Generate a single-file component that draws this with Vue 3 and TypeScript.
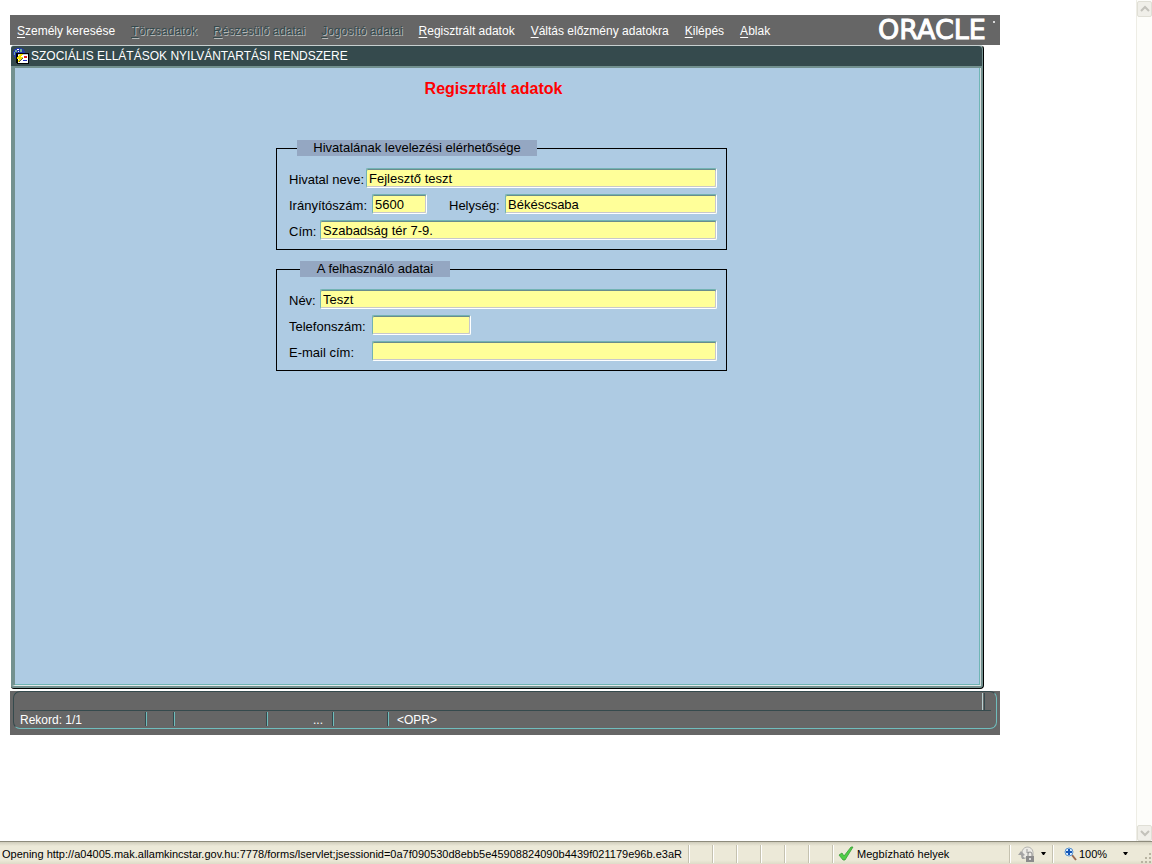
<script setup lang="ts">
import { ref } from 'vue'

interface MenuItem {
  label: string
  disabled?: boolean
}

const menu: MenuItem[] = [
  { label: 'Személy keresése' },
  { label: 'Törzsadatok', disabled: true },
  { label: 'Részesülő adatai', disabled: true },
  { label: 'Jogosító adatai', disabled: true },
  { label: 'Regisztrált adatok' },
  { label: 'Váltás előzmény adatokra' },
  { label: 'Kilépés' },
  { label: 'Ablak' },
]

const office = ref('Fejlesztő teszt')
const zip = ref('5600')
const city = ref('Békéscsaba')
const address = ref('Szabadság tér 7-9.')
const userName = ref('Teszt')
const phone = ref('')
const email = ref('')
</script>

<template>
  <div class="browser">
    <div class="viewport">
      <main class="page">
        <div class="applet">
          <header class="menubar">
            <nav class="menu">
              <button
                v-for="item in menu"
                :key="item.label"
                type="button"
                class="menu-item"
                :disabled="item.disabled"
              ><span class="key">{{ item.label.charAt(0) }}</span>{{ item.label.slice(1) }}</button>
            </nav>
            <svg class="logo" width="121" height="30" viewBox="0 0 121 30" role="img" aria-label="Oracle">
              <text x="0" y="24" class="logo-text">ORACLE</text>
              <circle cx="116" cy="7" r="1" fill="#fff" />
            </svg>
          </header>

          <section class="window">
            <div class="titlebar">
              <svg width="16" height="16" viewBox="0 0 16 16" shape-rendering="crispEdges" aria-hidden="true">
                <path d="M3 0h6v1h2v2h1v4H4v3H2V9H1V7H0V3h1V1h2z" fill="#2438a8" />
                <path d="M2 2h2v2H2v3H1V4h1zM7 1h2v3H7z" fill="#6fae98" />
                <path d="M4 1h2v1H4zM5 3h1v1H5z" fill="#fff" />
                <path d="M3 5h13v11H4v-1H3z" fill="#000" />
                <path d="M5 6h10v9H5z" fill="#fff" />
                <path d="M5 6h10v1H5z" fill="#c0c6dc" />
                <path d="M11 8h3v2h-3z" fill="#e02020" />
                <path d="M10 12h4v1h-4z" fill="#2030c0" />
                <path d="M7 6h3v1H9v1H8v1h2v1H9v1H8v1H7v1H6v1H5v-2h1v-1H4V9h1V8h1V7h1z" fill="#f5e000" />
                <path d="M9 10h1v1H9zM8 11h1v1H8zM7 12h1v1H7zM6 13h1v1H6z" fill="#555" />
              </svg>
              <span>SZOCIÁLIS ELLÁTÁSOK NYILVÁNTARTÁSI RENDSZERE</span>
            </div>
            <div class="canvas">
              <h1 class="heading">Regisztrált adatok</h1>
              <form class="form" @submit.prevent>
                <fieldset class="group">
                  <legend class="legend office-legend"><span class="caption">Hivatalának levelezési elérhetősége</span></legend>
                  <div class="row">
                    <label for="office" class="w-office">Hivatal neve:</label>
                    <input id="office" v-model="office" type="text" />
                  </div>
                  <div class="row">
                    <label for="zip" class="w-wide">Irányítószám:</label>
                    <input id="zip" v-model="zip" type="text" class="zip" />
                    <label for="city" class="w-city">Helység:</label>
                    <input id="city" v-model="city" type="text" />
                  </div>
                  <div class="row">
                    <label for="address" class="w-short">Cím:</label>
                    <input id="address" v-model="address" type="text" />
                  </div>
                </fieldset>
                <fieldset class="group">
                  <legend class="legend user-legend"><span class="caption">A felhasználó adatai</span></legend>
                  <div class="row">
                    <label for="name" class="w-short">Név:</label>
                    <input id="name" v-model="userName" type="text" />
                  </div>
                  <div class="row">
                    <label for="phone" class="w-wide">Telefonszám:</label>
                    <input id="phone" v-model="phone" type="tel" class="phone" />
                  </div>
                  <div class="row">
                    <label for="email" class="w-wide">E-mail cím:</label>
                    <input id="email" v-model="email" type="text" />
                  </div>
                </fieldset>
              </form>
            </div>
          </section>

          <footer class="console">
            <div class="console-box">
              <div class="message"></div>
              <div class="cells">
                <span class="cell record">Rekord: 1/1</span>
                <span class="cell narrow"></span>
                <span class="cell medium"></span>
                <span class="cell dots">...</span>
                <span class="cell small"></span>
                <span class="cell last">&lt;OPR&gt;</span>
              </div>
            </div>
          </footer>
        </div>
      </main>
      <div class="scrollbar">
        <button type="button" class="scroll-btn" aria-label="Scroll up">
          <svg width="10" height="8" viewBox="0 0 10 8"><path d="M1 6l4-4 4 4" /></svg>
        </button>
        <button type="button" class="scroll-btn" aria-label="Scroll down">
          <svg width="10" height="8" viewBox="0 0 10 8"><path d="M1 2l4 4 4-4" /></svg>
        </button>
      </div>
    </div>

    <footer class="statusbar">
      <span class="url">Opening http://a04005.mak.allamkincstar.gov.hu:7778/forms/lservlet;jsessionid=0a7f090530d8ebb5e45908824090b4439f021179e96b.e3aR</span>
      <span v-for="n in 6" :key="n" class="slot"></span>
      <span class="zone">
        <svg width="16" height="16" viewBox="0 0 16 16" aria-hidden="true">
          <path d="M1 9l3-2 2 3 7-9 2 0L7 14H5z" fill="#4fce45" stroke="#3a9c38" stroke-width=".8" />
        </svg>
        Megbízható helyek
      </span>
      <button type="button" class="lock" aria-label="Protected mode">
        <svg width="17" height="16" viewBox="0 0 17 16" aria-hidden="true">
          <path d="M4 12V7a5 5 0 0 1 11-1v6z" fill="#ecebe6" stroke="#b4b4b0" />
          <path d="M0 9l3-4 4 4-2 1 2 3H4l-1-4z" fill="#a4a4a4" />
          <path d="M9 3v4l2-1" fill="none" stroke="#999" />
          <rect x="8" y="10" width="8" height="6" fill="#8c8c8c" />
          <path d="M10 10V8a2 2 0 0 1 4 0v2" fill="none" stroke="#8c8c8c" />
          <path d="M11 12h2v2h-2z" fill="#ddd" />
        </svg>
        <svg width="5" height="3" viewBox="0 0 5 3" aria-hidden="true"><path d="M0 0h5L3 3H2z" /></svg>
      </button>
      <button type="button" class="zoom">
        <svg width="13" height="14" viewBox="0 0 13 14" aria-hidden="true">
          <path d="M8 8l4 5" stroke="#9a6a50" stroke-width="2" />
          <circle cx="5" cy="5" r="4" fill="#d9ecfc" stroke="#5b93cf" />
          <path d="M5 2v6M2 5h6" stroke="#1658b8" stroke-width="2" />
        </svg>
        <span>100%</span>
        <svg class="zoom-arrow" width="5" height="3" viewBox="0 0 5 3" aria-hidden="true"><path d="M0 0h5L3 3H2z" /></svg>
      </button>
      <svg class="grip" width="12" height="12" viewBox="0 0 12 12" aria-hidden="true">
        <path d="M9 1h2v2H9zM5 5h2v2H5zM9 5h2v2H9zM1 9h2v2H1zM5 9h2v2H5zM9 9h2v2H9z" fill="#b8b4a2" />
      </svg>
    </footer>
  </div>
</template>

<style>
html,
body {
  margin: 0;
  background: #fff;
}
</style>

<style scoped>
.browser {
  display: flex;
  flex-direction: column;
  min-height: 100vh;
  font: 12px/16px "Liberation Sans", Arial, sans-serif;
  color: #000;
}
button {
  border: 0;
  padding: 0;
  background: none;
  font: inherit;
  color: inherit;
}
.viewport {
  flex: 1;
  display: flex;
}
.page {
  flex: 1;
  min-width: 0;
  padding: 15px 10px;
}
.applet {
  max-width: 990px;
}
.menubar {
  display: flex;
  align-items: center;
  justify-content: space-between;
  height: 30px;
  padding: 0 1px 0 7px;
  background: #666;
  color: #fff;
}
.menu {
  display: flex;
  gap: 16px;
  padding-top: 2px;
  white-space: nowrap;
}
.menu-item:disabled {
  color: #354a4d;
  text-shadow: 1px 1px 0 #b4b8b8;
}
.key {
  text-decoration: underline;
  text-underline-offset: 2px;
}
.logo {
  overflow: visible;
}
.logo-text {
  font: 27px "DejaVu Sans", sans-serif;
  fill: #fff;
  stroke: #fff;
  stroke-width: 1px;
}
.window {
  margin: 0 16px 0 1px;
  border-top: 1px solid #c8d0d0;
  border-right: 1px solid #000;
  border-bottom: 1px solid #000;
  border-radius: 3px 4px 4px 3px;
  background: #73918f;
}
.titlebar {
  display: flex;
  align-items: center;
  gap: 2px;
  height: 20px;
  padding: 0 2px;
  margin-right: 1px;
  border-radius: 3px 4px 0 0;
  background: #354a4d;
  color: #fff;
  white-space: nowrap;
}
.canvas {
  margin: 2px 2px 2px 1px;
  border-left: 3px solid #73918f;
  border-right: 1px solid #d8dede;
  border-bottom: 1px solid #e4eaea;
  box-shadow: inset -1px -1px 0 #6fb5b5;
  min-height: 618px;
  padding-top: 11px;
  box-sizing: border-box;
  background: #aecbe3;
}
.heading {
  margin: 0 0 41px;
  padding-right: 8px;
  text-align: center;
  font-size: 16px;
  line-height: 20px;
  font-weight: bold;
  color: #f00;
}
.form {
  display: flex;
  flex-direction: column;
  gap: 11px;
  max-width: 451px;
  margin: 0 auto;
  padding-left: 8px;
  font-size: 13px;
}
.group {
  display: flex;
  flex-direction: column;
  gap: 6px;
  min-width: 0;
  margin: 0;
  padding: 12px 9px 9px 12px;
  border: 1px solid #000;
}
.legend {
  padding: 0;
}
.office-legend {
  width: 240px;
  margin-left: 8px;
}
.user-legend {
  width: 150px;
  margin-left: 11px;
}
.caption {
  display: block;
  text-align: center;
  line-height: 16px;
  background: #94a7c2;
}
.row {
  display: flex;
  height: 20px;
}
.row label {
  flex: none;
  line-height: 23px;
  white-space: nowrap;
}
.w-office {
  width: 77px;
}
.w-wide {
  width: 83px;
}
.w-city {
  width: 56px;
  margin-left: 22px;
}
.w-short {
  width: 31px;
}
input {
  flex: 1;
  min-width: 0;
  height: 20px;
  box-sizing: border-box;
  padding: 0 2px;
  border: 1px solid;
  border-color: #73b3b3 #fff #fff #73b3b3;
  border-radius: 2px;
  background: #ffff99;
  box-shadow: inset 0 1px 0 #6a8c8c, inset -1px -1px 0 #c8c8cc;
  font: 13px "Liberation Sans", Arial, sans-serif;
  color: #000;
}
.zip {
  flex: 0 0 55px;
}
.phone {
  flex: 0 0 99px;
}
.console {
  margin-top: 2px;
  height: 44px;
  padding: 0 3px;
  box-sizing: border-box;
  background: #666;
  color: #fff;
}
.console-box {
  height: 38px;
  box-sizing: border-box;
  border: 1px solid;
  border-color: #354a4d #6fbdbd #6fbdbd #354a4d;
  border-radius: 7px;
  padding: 1px 5px 0 6px;
}
.message {
  height: 18px;
  box-sizing: border-box;
  border-bottom: 1px solid #354a4d;
  background: linear-gradient(#354a4d, #354a4d) right 6px top / 1px 100% no-repeat,
    linear-gradient(#b8d0d0, #b8d0d0) right 8px top / 1px 100% no-repeat;
}
.cells {
  display: flex;
  padding-top: 1px;
}
.cell {
  box-sizing: border-box;
  height: 14px;
  line-height: 16px;
  border-right: 1px solid #6fbdbd;
  box-shadow: inset -1px 0 0 #354a4d;
}
.record {
  width: 127px;
}
.narrow {
  width: 28px;
}
.medium {
  width: 93px;
}
.dots {
  width: 66px;
  padding-right: 10px;
  text-align: right;
}
.small {
  width: 55px;
}
.last {
  padding-left: 8px;
  border-right: 0;
  box-shadow: none;
}
.scrollbar {
  display: flex;
  flex-direction: column;
  justify-content: space-between;
  width: 16px;
  box-sizing: border-box;
  padding: 1px 0 0;
  border-left: 1px solid #eeede5;
  background: #fdfdfa;
}
.scroll-btn {
  display: grid;
  place-items: center;
  width: 15px;
  height: 16px;
  border: 1px solid #e0dfd6;
  border-radius: 2px;
  background: #f0efe9;
}
.scroll-btn path {
  fill: none;
  stroke: #c3c2bb;
  stroke-width: 2;
}
.statusbar {
  display: flex;
  align-items: center;
  height: 23px;
  box-sizing: border-box;
  padding-top: 1px;
  border-top: 1px solid #8d8b7c;
  background: linear-gradient(#cfccbb, #ece9d8 4px, #ece9d8 18px, #dedbc8);
  font: 11px/16px "Liberation Sans", Arial, sans-serif;
  white-space: nowrap;
}
.url {
  flex: 0 1 688px;
  min-width: 0;
  box-sizing: border-box;
  padding-left: 2px;
  overflow: hidden;
}
.slot,
.zone,
.lock,
.zoom {
  height: 18px;
  box-sizing: border-box;
  border-left: 1px solid #c5c2b0;
  box-shadow: inset 1px 0 0 #fff;
}
.slot {
  width: 24px;
}
.zone {
  flex: 1;
  display: flex;
  align-items: center;
  gap: 3px;
  padding-left: 5px;
}
.lock {
  display: flex;
  align-items: center;
  gap: 6px;
  width: 43px;
  padding-left: 8px;
}
.zoom {
  display: flex;
  align-items: center;
  gap: 2px;
  width: 88px;
  padding-left: 11px;
}
.zoom-arrow {
  margin-left: 14px;
}
.grip {
  align-self: flex-end;
}
</style>
